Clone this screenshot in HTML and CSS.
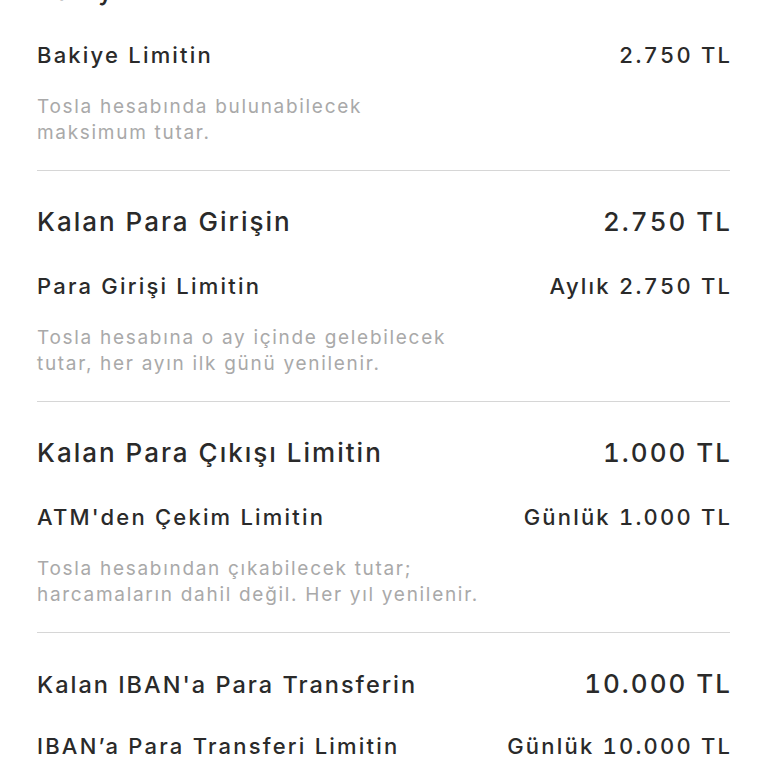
FILE: index.html
```html
<!DOCTYPE html>
<html lang="tr">
<head>
<meta charset="utf-8">
<title>Limitler</title>
<link rel="stylesheet" href="styles.css">
</head>
<body>
<main class="list">
  <section class="section section--first">
    <div class="row row--main"><span>Bakiyen</span><span class="value">0 TL</span></div>
    <div class="row row--sub"><span>Bakiye Limitin</span><span class="value">2.750 TL</span></div>
    <p class="desc">Tosla hesabında bulunabilecek<br>maksimum tutar.</p>
  </section>
  <section class="section">
    <div class="row row--main"><span>Kalan Para Girişin</span><span class="value">2.750 TL</span></div>
    <div class="row row--sub"><span>Para Girişi Limitin</span><span class="value">Aylık 2.750 TL</span></div>
    <p class="desc">Tosla hesabına o ay içinde gelebilecek<br>tutar, her ayın ilk günü yenilenir.</p>
  </section>
  <section class="section">
    <div class="row row--main"><span>Kalan Para Çıkışı Limitin</span><span class="value">1.000 TL</span></div>
    <div class="row row--sub"><span>ATM'den Çekim Limitin</span><span class="value">Günlük 1.000 TL</span></div>
    <p class="desc">Tosla hesabından çıkabilecek tutar;<br>harcamaların dahil değil. Her yıl yenilenir.</p>
  </section>
  <section class="section section--last">
    <div class="row row--main"><span class="label-small">Kalan IBAN'a Para Transferin</span><span class="value">10.000 TL</span></div>
    <div class="row row--sub"><span>IBAN’a Para Transferi Limitin</span><span class="value">Günlük 10.000 TL</span></div>
  </section>
</main>
</body>
</html>
```
FILE: styles.css
```css
html, body {
  margin: 0;
  padding: 0;
  background: #ffffff;
}

body {
  font-family: "Inter", "Noto Sans", sans-serif;
  color: #2a2a2a;
  height: 768px;
  overflow: hidden;
}

.list {
  padding: 0 38px 0 37px;
}

.section {
  padding: 36px 0 24px;
  border-bottom: 1px solid #d6d6d6;
}

.section--first {
  margin-top: -60px;
}

.section--last {
  border-bottom: none;
}

.row {
  display: flex;
  justify-content: space-between;
  align-items: baseline;
  white-space: nowrap;
  font-variant-numeric: tabular-nums;
}

.row--main {
  font-size: 26px;
  line-height: 30px;
  font-weight: 500;
  letter-spacing: 2px;
}

.row--main .value {
  margin-right: -2px;
}

.row--sub {
  margin-top: 34px;
  font-size: 22px;
  line-height: 30px;
  font-weight: 500;
  letter-spacing: 2.2px;
}

.row--sub .value {
  margin-right: -2.2px;
}

.section--last .row--sub {
  margin-top: 31px;
}

.label-small {
  font-size: 23.5px;
}

.desc {
  margin: 24px 0 0;
  font-size: 19px;
  line-height: 26px;
  letter-spacing: 1.7px;
  color: #a9a9a9;
}
```
